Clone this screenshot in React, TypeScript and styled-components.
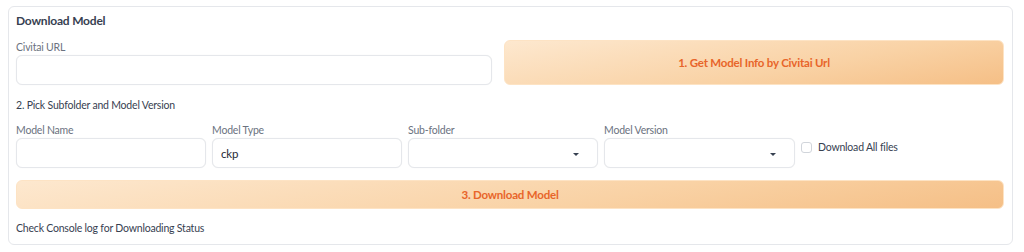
import React from 'react';
import styled, { createGlobalStyle } from 'styled-components';

// Global page reset
const GlobalStyle = createGlobalStyle`
  html, body {
    margin: 0;
    padding: 0;
    background: #ffffff;
  }
  body {
    font-family: 'Lato', 'Liberation Sans', sans-serif;
    color: #374151;
    letter-spacing: -0.2px;
  }
`;

const App: React.FC = () => {
  const [url, setUrl] = React.useState('');
  const [modelName, setModelName] = React.useState('');
  const [modelType, setModelType] = React.useState('ckp');
  const [allFiles, setAllFiles] = React.useState(false);

  return (
    <StyledPage>
      <GlobalStyle />
      <Panel>
        <Title>Download Model</Title>
        <UrlRow>
          <Field>
            <Label>Civitai URL</Label>
            <TextInput value={url} onChange={(e) => setUrl(e.target.value)} />
          </Field>
          <ActionButton $tall>1. Get Model Info by Civitai Url</ActionButton>
        </UrlRow>
        <Note $top={14}>2. Pick Subfolder and Model Version</Note>
        <FieldRow>
          <Field>
            <Label>Model Name</Label>
            <TextInput value={modelName} onChange={(e) => setModelName(e.target.value)} />
          </Field>
          <Field>
            <Label>Model Type</Label>
            <TextInput value={modelType} onChange={(e) => setModelType(e.target.value)} />
          </Field>
          <Field>
            <Label>Sub-folder</Label>
            <SelectBox>
              <Caret />
            </SelectBox>
          </Field>
          <Field>
            <Label>Model Version</Label>
            <SelectBox>
              <Caret />
            </SelectBox>
          </Field>
          <CheckLabel>
            <CheckBox
              type="checkbox"
              checked={allFiles}
              onChange={(e) => setAllFiles(e.target.checked)}
            />
            Download All files
          </CheckLabel>
        </FieldRow>
        <ActionButton>3. Download Model</ActionButton>
        <Note>Check Console log for Downloading Status</Note>
      </Panel>
    </StyledPage>
  );
};

const StyledPage = styled.div`
  width: 1024px;
  height: 252px;
  padding: 6px 11px 0 8px;
  box-sizing: border-box;
`;

const Panel = styled.div`
  border: 1px solid #e5e7eb;
  border-radius: 6px;
  padding: 7px 8px 9px 7px;
  display: flex;
  flex-direction: column;
  box-sizing: border-box;
  height: 239px;
`;

const Title = styled.div`
  font-size: 12px;
  font-weight: 700;
  color: #374151;
  line-height: 14px;
  margin-bottom: 11px;
`;

const UrlRow = styled.div`
  display: flex;
  gap: 12px;
  align-items: flex-end;
  & > :first-child {
    width: 476px;
    flex: none;
  }
`;

const FieldRow = styled.div`
  display: grid;
  grid-template-columns: 190px 190px 190px 191px 1fr;
  column-gap: 6px;
  margin-top: 10px;
`;

const Field = styled.div`
  display: flex;
  flex-direction: column;
`;

const Label = styled.div`
  font-size: 10.5px;
  color: #6b7280;
  line-height: 16px;
`;

const TextInput = styled.input`
  height: 30px;
  box-sizing: border-box;
  border: 1px solid #e5e7eb;
  border-radius: 6px;
  box-shadow: 0 0 1px rgba(0, 0, 0, 0.08);
  padding: 0 8px;
  font-family: inherit;
  font-size: 11.5px;
  letter-spacing: -0.2px;
  color: #1f2937;
  outline: none;
  background: #fff;
`;

const SelectBox = styled.div`
  height: 30px;
  box-sizing: border-box;
  border: 1px solid #e5e7eb;
  border-radius: 6px;
  box-shadow: 0 0 1px rgba(0, 0, 0, 0.08);
  display: flex;
  align-items: center;
  justify-content: flex-end;
  padding-right: 18px;
  background: #fff;
`;

const Caret = styled.span`
  width: 0;
  height: 0;
  border-left: 3px solid transparent;
  border-right: 3px solid transparent;
  border-top: 3px solid #374151;
  margin-top: 2px;
`;

const CheckLabel = styled.label`
  display: flex;
  align-items: center;
  gap: 6px;
  font-size: 10.5px;
  color: #374151;
  align-self: start;
  margin-top: 19px;
  line-height: 13px;
`;

const CheckBox = styled.input`
  appearance: none;
  width: 11px;
  height: 11px;
  margin: 0;
  border: 1px solid #d1d5db;
  border-radius: 3px;
  background: #fff;
`;

const ActionButton = styled.button<{ $tall?: boolean }>`
  height: ${(p) => (p.$tall ? '45px' : '29px')};
  flex: 1;
  border: 1px solid #fde3c4;
  border-radius: 6px;
  background: linear-gradient(170deg, #fde8cf 0%, #f9d2a5 60%, #f5bf86 100%);
  color: #e8652a;
  font-family: inherit;
  font-size: 11.5px;
  letter-spacing: -0.2px;
  font-weight: 700;
  cursor: pointer;
  margin-top: ${(p) => (p.$tall ? '0' : '12px')};
`;

const Note = styled.div<{ $top?: number }>`
  font-size: 10.5px;
  color: #374151;
  line-height: 13px;
  margin-top: ${(p) => p.$top ?? 13}px;
`;

export default App;
